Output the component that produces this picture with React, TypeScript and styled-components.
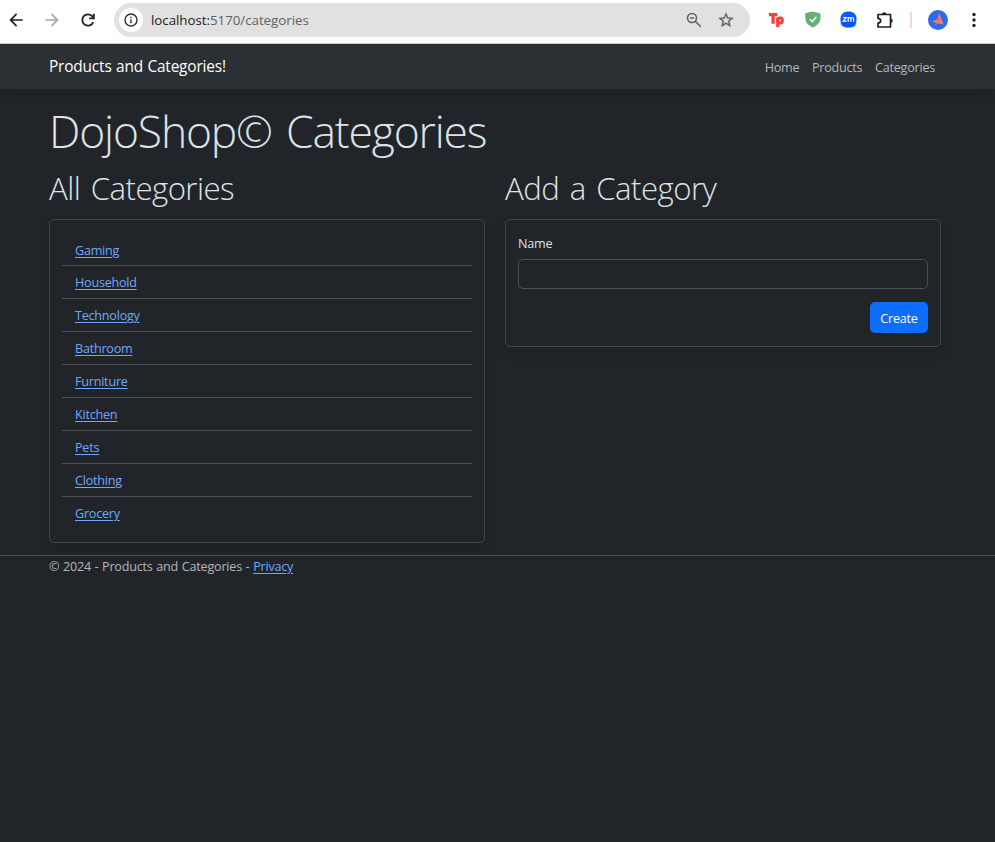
import React from 'react';
import styled, { createGlobalStyle } from 'styled-components';

const GlobalStyle = createGlobalStyle`
  * { box-sizing: border-box; }
  html, body { margin: 0; background: #212529; }
  body {
    color: #dee2e6;
    font-family: "Open Sans", "Noto Sans", sans-serif;
    font-size: 12.6px;
    line-height: 19px;
    letter-spacing: -0.23px;
  }
  h1, h2, p, ul { margin: 0; padding: 0; font-weight: inherit; }
`;

const Page = styled.div`
  min-height: 842px;
  background: #212529;
`;

const BrowserBar = styled.div`
  display: flex;
  align-items: center;
  height: 44px;
  padding: 0 11px 4px 6px;
  background: #fff;
  border-bottom: 1px solid #cdd0d1;
`;

const BarIcon = styled.svg<{ $gap?: number }>`
  display: block;
  flex: none;
  margin-left: ${(p) => p.$gap ?? 0}px;
`;

const AddressBar = styled.div`
  display: flex;
  align-items: center;
  flex: none;
  width: 636px;
  height: 34px;
  margin-left: 16px;
  padding: 0 15px 0 5px;
  border-radius: 17px;
  background: #e1e1e1;
`;

const SiteInfo = styled.span`
  display: grid;
  place-items: center;
  width: 24px;
  height: 24px;
  border-radius: 50%;
  background: #fff;
`;

const Url = styled.span`
  flex: 1;
  margin-left: 8px;
  padding-top: 1px;
  color: #5f6164;
  font-size: 13.3px;
  letter-spacing: -0.02px;
`;

const Host = styled.span`
  color: #1f2023;
`;

const Separator = styled.span`
  flex: none;
  width: 2px;
  height: 16px;
  margin-left: 15px;
  background: #f8d3e2;
`;

const Navbar = styled.nav`
  display: flex;
  align-items: center;
  justify-content: space-between;
  height: 45px;
  padding: 0 60px 0 49px;
  background: #2b3035;
  box-shadow: 0 6px 13px rgba(0, 0, 0, 0.15);
`;

const Brand = styled.span`
  color: #fff;
  font-size: 15.4px;
  letter-spacing: -0.16px;
  word-spacing: 0.6px;
`;

const NavLinks = styled.div`
  display: flex;
  gap: 12.6px;
  padding-top: 2px;
  color: #b5b8ba;
`;

const NavLink = styled.a`
  white-space: nowrap;
`;

const Main = styled.main`
  padding: 15px 54px 12px 49px;
`;

const Title = styled.h1`
  font-size: 44.4px;
  font-weight: 300;
  line-height: 54px;
  letter-spacing: -1.15px;
  word-spacing: 3.8px;
`;

const Columns = styled.div`
  display: grid;
  grid-template-columns: 436px 436px;
  gap: 20px;
  align-items: start;
  padding-top: 11px;
`;

const Heading = styled.h2`
  margin-bottom: 11px;
  font-size: 31.2px;
  font-weight: 300;
  line-height: 39px;
  letter-spacing: -0.55px;
  word-spacing: 3px;
`;

const Card = styled.section`
  padding: 12px;
  border: 1px solid #42464a;
  border-radius: 5px;
  box-shadow: 0 6px 13px rgba(0, 0, 0, 0.15);
`;

const CategoryList = styled.ul`
  list-style: none;
`;

const CategoryRow = styled.li`
  height: 33px;
  padding: 7px 13px 0;
  border-bottom: 1px solid #495057;
  &:first-child { height: 34px; padding-top: 9px; }
  &:last-child { border-bottom: 0; }
`;

const Link = styled.a`
  color: #6ea8fe;
  text-decoration: underline;
  text-underline-offset: 1.5px;
  text-decoration-thickness: 1px;
`;

const Form = styled.form`
  display: flex;
  flex-direction: column;
  padding-top: 2px;
`;

const Label = styled.label`
  margin-bottom: 6px;
`;

const Input = styled.input`
  width: 100%;
  height: 30px;
  border: 1px solid #495057;
  border-radius: 5px;
  background: #212529;
  color: #dee2e6;
`;

const Button = styled.button`
  align-self: flex-end;
  width: 58px;
  height: 31px;
  margin: 13px 0 1px;
  padding: 1px 0 0;
  border: 0;
  border-radius: 5px;
  background: #0d6efd;
  color: #fff;
  font: inherit;
  letter-spacing: inherit;
`;

const Footer = styled.footer`
  padding: 1px 49px;
  border-top: 1px solid #495057;
  color: #b3b6b9;
  letter-spacing: -0.21px;
  word-spacing: 0.6px;
`;

const categories = [
  'Gaming', 'Household', 'Technology', 'Bathroom', 'Furniture',
  'Kitchen', 'Pets', 'Clothing', 'Grocery',
];

function Toolbar() {
  return (
    <BrowserBar>
      <BarIcon width="20" height="20" viewBox="0 0 24 24" fill="#1f2023">
        <path d="M20 11H7.83l5.59-5.59L12 4l-8 8 8 8 1.41-1.41L7.83 13H20z" />
      </BarIcon>
      <BarIcon $gap={16} width="20" height="20" viewBox="0 0 24 24" fill="#a5a6a7">
        <path d="M4 11h12.170l-5.590-5.590L12 4l8 8-8 8-1.410-1.410L16.170 13H4z" />
      </BarIcon>
      <BarIcon $gap={16} width="20" height="20" viewBox="0 0 24 24" fill="none" stroke="#1f2023" strokeWidth="2.2">
        <path d="M18.300 14.500A6.800 6.800 0 1 1 17.300 7.700L19 9.500" />
        <path d="M19 4.500V10H13.500" />
      </BarIcon>
      <AddressBar>
        <SiteInfo>
          <svg width="14" height="14" viewBox="0 0 14 14" fill="none" stroke="#303134" strokeWidth="1.4">
            <circle cx="7" cy="7" r="6" />
            <path d="M7 6.300V10.300M7 3.700V5.100" />
          </svg>
        </SiteInfo>
        <Url><Host>localhost:</Host>5170/categories</Url>
        <BarIcon width="18" height="18" viewBox="0 0 18 18" fill="none" stroke="#5f6164" strokeWidth="1.600">
          <circle cx="7" cy="7" r="4.500" />
          <path d="M10.300 10.300L15.800 15.800M5 7h4" />
        </BarIcon>
        <BarIcon $gap={14} width="18" height="18" viewBox="0 0 24 24" fill="#5f6164" stroke="#5f6164" strokeWidth=".4">
          <path d="M22 9.240l-7.190-.620L12 2 9.190 8.630 2 9.240l5.460 4.730L5.820 21 12 17.270 18.180 21l-1.630-7.030L22 9.240zM12 15.400l-3.760 2.270 1-4.280-3.320-2.880 4.380-.380L12 6.100l1.710 4.040 4.380.380-3.320 2.880 1 4.280L12 15.400z" />
        </BarIcon>
      </AddressBar>
      <BarIcon $gap={18} width="17" height="18" viewBox="0 0 17 18" stroke="#fb3d3d" fill="none">
        <path d="M.800 3.700H9.400M5.100 4V12.700M9.800 6.800V16.200" strokeWidth="3.200" />
        <circle cx="12" cy="9.500" r="2.500" strokeWidth="2.800" />
      </BarIcon>
      <BarIcon $gap={19.500} width="16" height="17" viewBox="0 0 16 17">
        <path d="M8 .700C5.500 1 3 1.500.500 2.400V7c0 4.300 3.300 7.600 7.500 9.600 4.200-2 7.500-5.300 7.500-9.600V2.400C13 1.500 10.500 1 8 .700z" fill="#67b279" />
        <path d="M8 .700C5.500 1 3 1.500.500 2.400V7c0 4.300 3.300 7.600 7.500 9.600z" fill="#60ad72" />
        <path d="M4.700 8l2.500 2.600 4.200-4.800" fill="none" stroke="#fff" strokeWidth="1.400" />
      </BarIcon>
      <BarIcon $gap={19} width="17" height="17" viewBox="0 0 17 17">
        <rect x=".500" y=".500" width="16" height="16" rx="7" fill="#0b5cff" />
        <rect x=".500" y="9" width="16" height="7.500" rx="6" fill="#084bd9" opacity=".5" />
        <path d="M3 6.500h3.300L3.200 10.200h3.500M8.200 10.800V6.300M8.200 8c0-2 2.700-2 2.700 0v2.800M10.900 8c0-2 2.700-2 2.700 0v2.800" fill="none" stroke="#fff" strokeWidth="1.200" />
      </BarIcon>
      <BarIcon $gap={19.500} width="19" height="20" viewBox="0 0 19 20" fill="#1f2023">
        <path d="M2 4.500H14.500V17H2V13.200C5.600 13 5.600 8.600 2 8.400z" fill="none" stroke="#1f2023" strokeWidth="1.700" strokeLinejoin="round" />
        <path d="M6 4.500a2.200 2.200 0 0 1 4.400 0zM14.500 8.500a2.200 2.200 0 0 1 0 4.400z" />
      </BarIcon>
      <Separator />
      <BarIcon $gap={16} width="20" height="20" viewBox="0 0 20 20">
        <circle cx="10" cy="10" r="10" fill="#2c6ceb" />
        <path d="M11.200 3L13.200 8.300 15.600 14.400 11 13.500 7.400 14.600 8 12.600 3.700 11.700 9 9.300z" fill="#f77b72" />
        <path d="M11.200 3L11 13.500 9 9.300zM8 12.600L11 13.500 7.400 14.600z" fill="#d9616c" />
      </BarIcon>
      <BarIcon $gap={16} width="20" height="20" viewBox="0 0 20 20" fill="#1f2023">
        <circle cx="10" cy="4.500" r="1.700" />
        <circle cx="10" cy="10" r="1.700" />
        <circle cx="10" cy="15.500" r="1.700" />
      </BarIcon>
    </BrowserBar>
  );
}

export default function App() {
  return (
    <Page>
      <GlobalStyle />
      <Toolbar />
      <Navbar>
        <Brand>Products and Categories!</Brand>
        <NavLinks>
          <NavLink>Home</NavLink>
          <NavLink>Products</NavLink>
          <NavLink>Categories</NavLink>
        </NavLinks>
      </Navbar>
      <Main>
        <Title>DojoShop© Categories</Title>
        <Columns>
          <div>
            <Heading>All Categories</Heading>
            <Card>
              <CategoryList>
                {categories.map((name) => (
                  <CategoryRow key={name}><Link>{name}</Link></CategoryRow>
                ))}
              </CategoryList>
            </Card>
          </div>
          <div>
            <Heading>Add a Category</Heading>
            <Card>
              <Form>
                <Label htmlFor="name">Name</Label>
                <Input id="name" />
                <Button type="button">Create</Button>
              </Form>
            </Card>
          </div>
        </Columns>
      </Main>
      <Footer>© 2024 - Products and Categories - <Link>Privacy</Link></Footer>
    </Page>
  );
}
